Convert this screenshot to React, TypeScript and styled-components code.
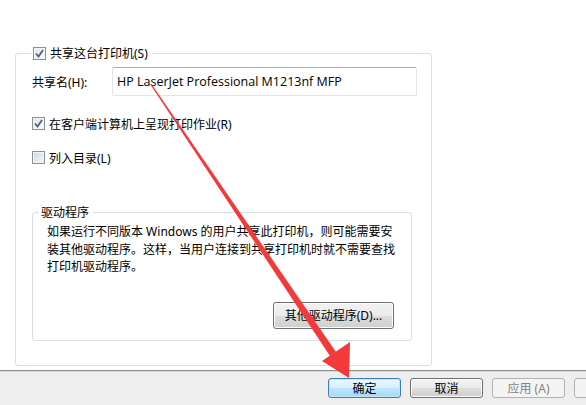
import React, { FunctionComponent } from 'react';
import styled, { createGlobalStyle } from 'styled-components';

const GlobalStyle = createGlobalStyle`
    html, body {
        margin: 0;
        padding: 0;
        background: #fff;
    }
    body {
        font-family: "Noto Sans", "Noto Sans CJK SC", sans-serif;
        font-size: 12px;
        color: #000;
    }
`;

const Page = styled.div`
    position: relative;
    width: 586px;
    height: 405px;
    overflow: hidden;
    display: flex;
    flex-direction: column;
`;

const Content = styled.div`
    height: 370px;
    box-sizing: border-box;
    padding: 46px 0 0 15px;
    background: #fff;
`;

const Group = styled.fieldset<{ $width: number; $height: number }>`
    margin: 0;
    box-sizing: border-box;
    width: ${p => p.$width}px;
    height: ${p => p.$height}px;
    border: 1px solid #d5dfe5;
    border-radius: 3px;
    padding: 0;
    position: relative;
`;

const Legend = styled.legend<{ $indent: number }>`
    margin-left: ${p => p.$indent}px;
    padding: 0 4px 0 2px;
    height: 15px;
    line-height: 15px;
    display: flex;
    align-items: center;
    gap: 4px;
    white-space: nowrap;
`;

const GroupBody = styled.div`
    padding: 6px 0 0 16px;
    display: flex;
    flex-direction: column;
`;

const NameRow = styled.div`
    display: flex;
    align-items: center;
    height: 29px;
`;

const NameLabel = styled.span`
    width: 80px;
`;

const TextBox = styled.div`
    box-sizing: border-box;
    width: 305px;
    height: 29px;
    border: 1px solid #dfe5ea;
    border-top-color: #abadb3;
    border-radius: 2px;
    padding-left: 4px;
    display: flex;
    align-items: center;
    font-family: "Open Sans", "Noto Sans CJK SC", sans-serif;
    font-size: 12.5px;
`;

const CheckRow = styled.label<{ $top: number }>`
    display: flex;
    align-items: center;
    gap: 4px;
    height: 15px;
    margin-top: ${p => p.$top}px;
`;

const Box = styled.span<{ $checked?: boolean }>`
    box-sizing: border-box;
    width: 13px;
    height: 13px;
    border: 1px solid #8e8f8f;
    background: ${p =>
        p.$checked
            ? 'linear-gradient(135deg, #e6e6e6, #fbfbfb)'
            : 'linear-gradient(135deg, #cfd9e5, #f4f7fb)'};
    box-shadow: inset 0 0 0 1px #f4f4f4;
    display: flex;
    align-items: center;
    justify-content: center;
    flex-shrink: 0;
`;

const DriverGroupWrap = styled.div`
    margin-top: 40px;
`;

const DriverText = styled.p`
    margin: 3px 0 0 14px;
    line-height: 17.5px;
    white-space: nowrap;
`;

const DriverActions = styled.div`
    display: flex;
    justify-content: flex-end;
    padding-right: 17px;
    margin-top: 26px;
`;

const Button = styled.button<{ $width: number; $default?: boolean }>`
    box-sizing: border-box;
    width: ${p => p.$width}px;
    font-family: "Noto Sans", "Noto Sans CJK SC", sans-serif;
    font-size: 12px;
    color: #000;
    padding: 0;
    border-radius: 3px;
    border: 1px solid ${p => (p.$default ? '#3c7fb1' : '#707070')};
    background: ${p =>
        p.$default
            ? 'linear-gradient(#eaf6fd 0%, #d9f0fc 50%, #bee6fd 51%, #a7d9f5 100%)'
            : 'linear-gradient(#f2f2f2 0%, #ebebeb 50%, #dddddd 51%, #cfcfcf 100%)'};
    box-shadow: inset 0 0 0 1px ${p => (p.$default ? '#c4e5f6' : '#fcfcfc')};

    &:disabled {
        color: #838383;
        border-color: #adb2b5;
        background: #f4f4f4;
        box-shadow: none;
    }
`;

const DriverButton = styled(Button)`
    height: 27px;
`;

const Footer = styled.div`
    flex: 1;
    background: #eeeeee;
    border-top: 1px solid #8e8f8f;
    box-shadow: inset 0 1px 0 #d6d6d6;
    display: flex;
    align-items: flex-start;
    gap: 9px;
    padding: 7px 0 0 328px;
`;

const FooterButton = styled(Button)`
    height: 20px;
    flex-shrink: 0;
`;

const ArrowLayer = styled.svg`
    position: absolute;
    left: 0;
    top: 0;
    pointer-events: none;
`;

const Check: FunctionComponent = () => (
    <svg width="9" height="9" viewBox="0 0 9 9">
        <path d="M1 4.5 L3.5 7.5 L8 1" fill="none" stroke="#4a5f97" strokeWidth="1.8" />
    </svg>
);

interface CheckItemProps {
    label: string;
    checked?: boolean;
    top: number;
}

const CheckItem: FunctionComponent<CheckItemProps> = ({ label, checked, top }) => (
    <CheckRow $top={top}>
        <Box $checked={checked}>{checked && <Check />}</Box>
        {label}
    </CheckRow>
);

const App: FunctionComponent = () => {
    return (
        <Page>
            <GlobalStyle />
            <Content>
                <Group $width={417} $height={320}>
                    <Legend $indent={15}>
                        <Box $checked>
                            <Check />
                        </Box>
                        共享这台打印机(S)
                    </Legend>
                    <GroupBody>
                        <NameRow>
                            <NameLabel>共享名(H):</NameLabel>
                            <TextBox>HP LaserJet Professional M1213nf MFP</TextBox>
                        </NameRow>
                        <CheckItem top={20} checked label="在客户端计算机上呈现打印作业(R)" />
                        <CheckItem top={19} label="列入目录(L)" />
                        <DriverGroupWrap>
                            <Group $width={380} $height={136}>
                                <Legend $indent={6}>驱动程序</Legend>
                                <DriverText>
                                    如果运行不同版本 Windows 的用户共享此打印机，则可能需要安
                                    <br />
                                    装其他驱动程序。这样，当用户连接到共享打印机时就不需要查找
                                    <br />
                                    打印机驱动程序。
                                </DriverText>
                                <DriverActions>
                                    <DriverButton $width={121}>其他驱动程序(D)...</DriverButton>
                                </DriverActions>
                            </Group>
                        </DriverGroupWrap>
                    </GroupBody>
                </Group>
            </Content>
            <Footer>
                <FooterButton $width={73} $default>确定</FooterButton>
                <FooterButton $width={73}>取消</FooterButton>
                <FooterButton $width={73} disabled>应用 (A)</FooterButton>
                <FooterButton $width={73} disabled></FooterButton>
            </Footer>
            <ArrowLayer width="586" height="405" viewBox="0 0 586 405">
                <polygon
                    points="150,84 151.5,84 336,352 330,356"
                    fill="#f23a3a"
                />
                <polygon points="322,361 350,342 349,378" fill="#f23a3a" />
            </ArrowLayer>
        </Page>
    );
};

export default App;
